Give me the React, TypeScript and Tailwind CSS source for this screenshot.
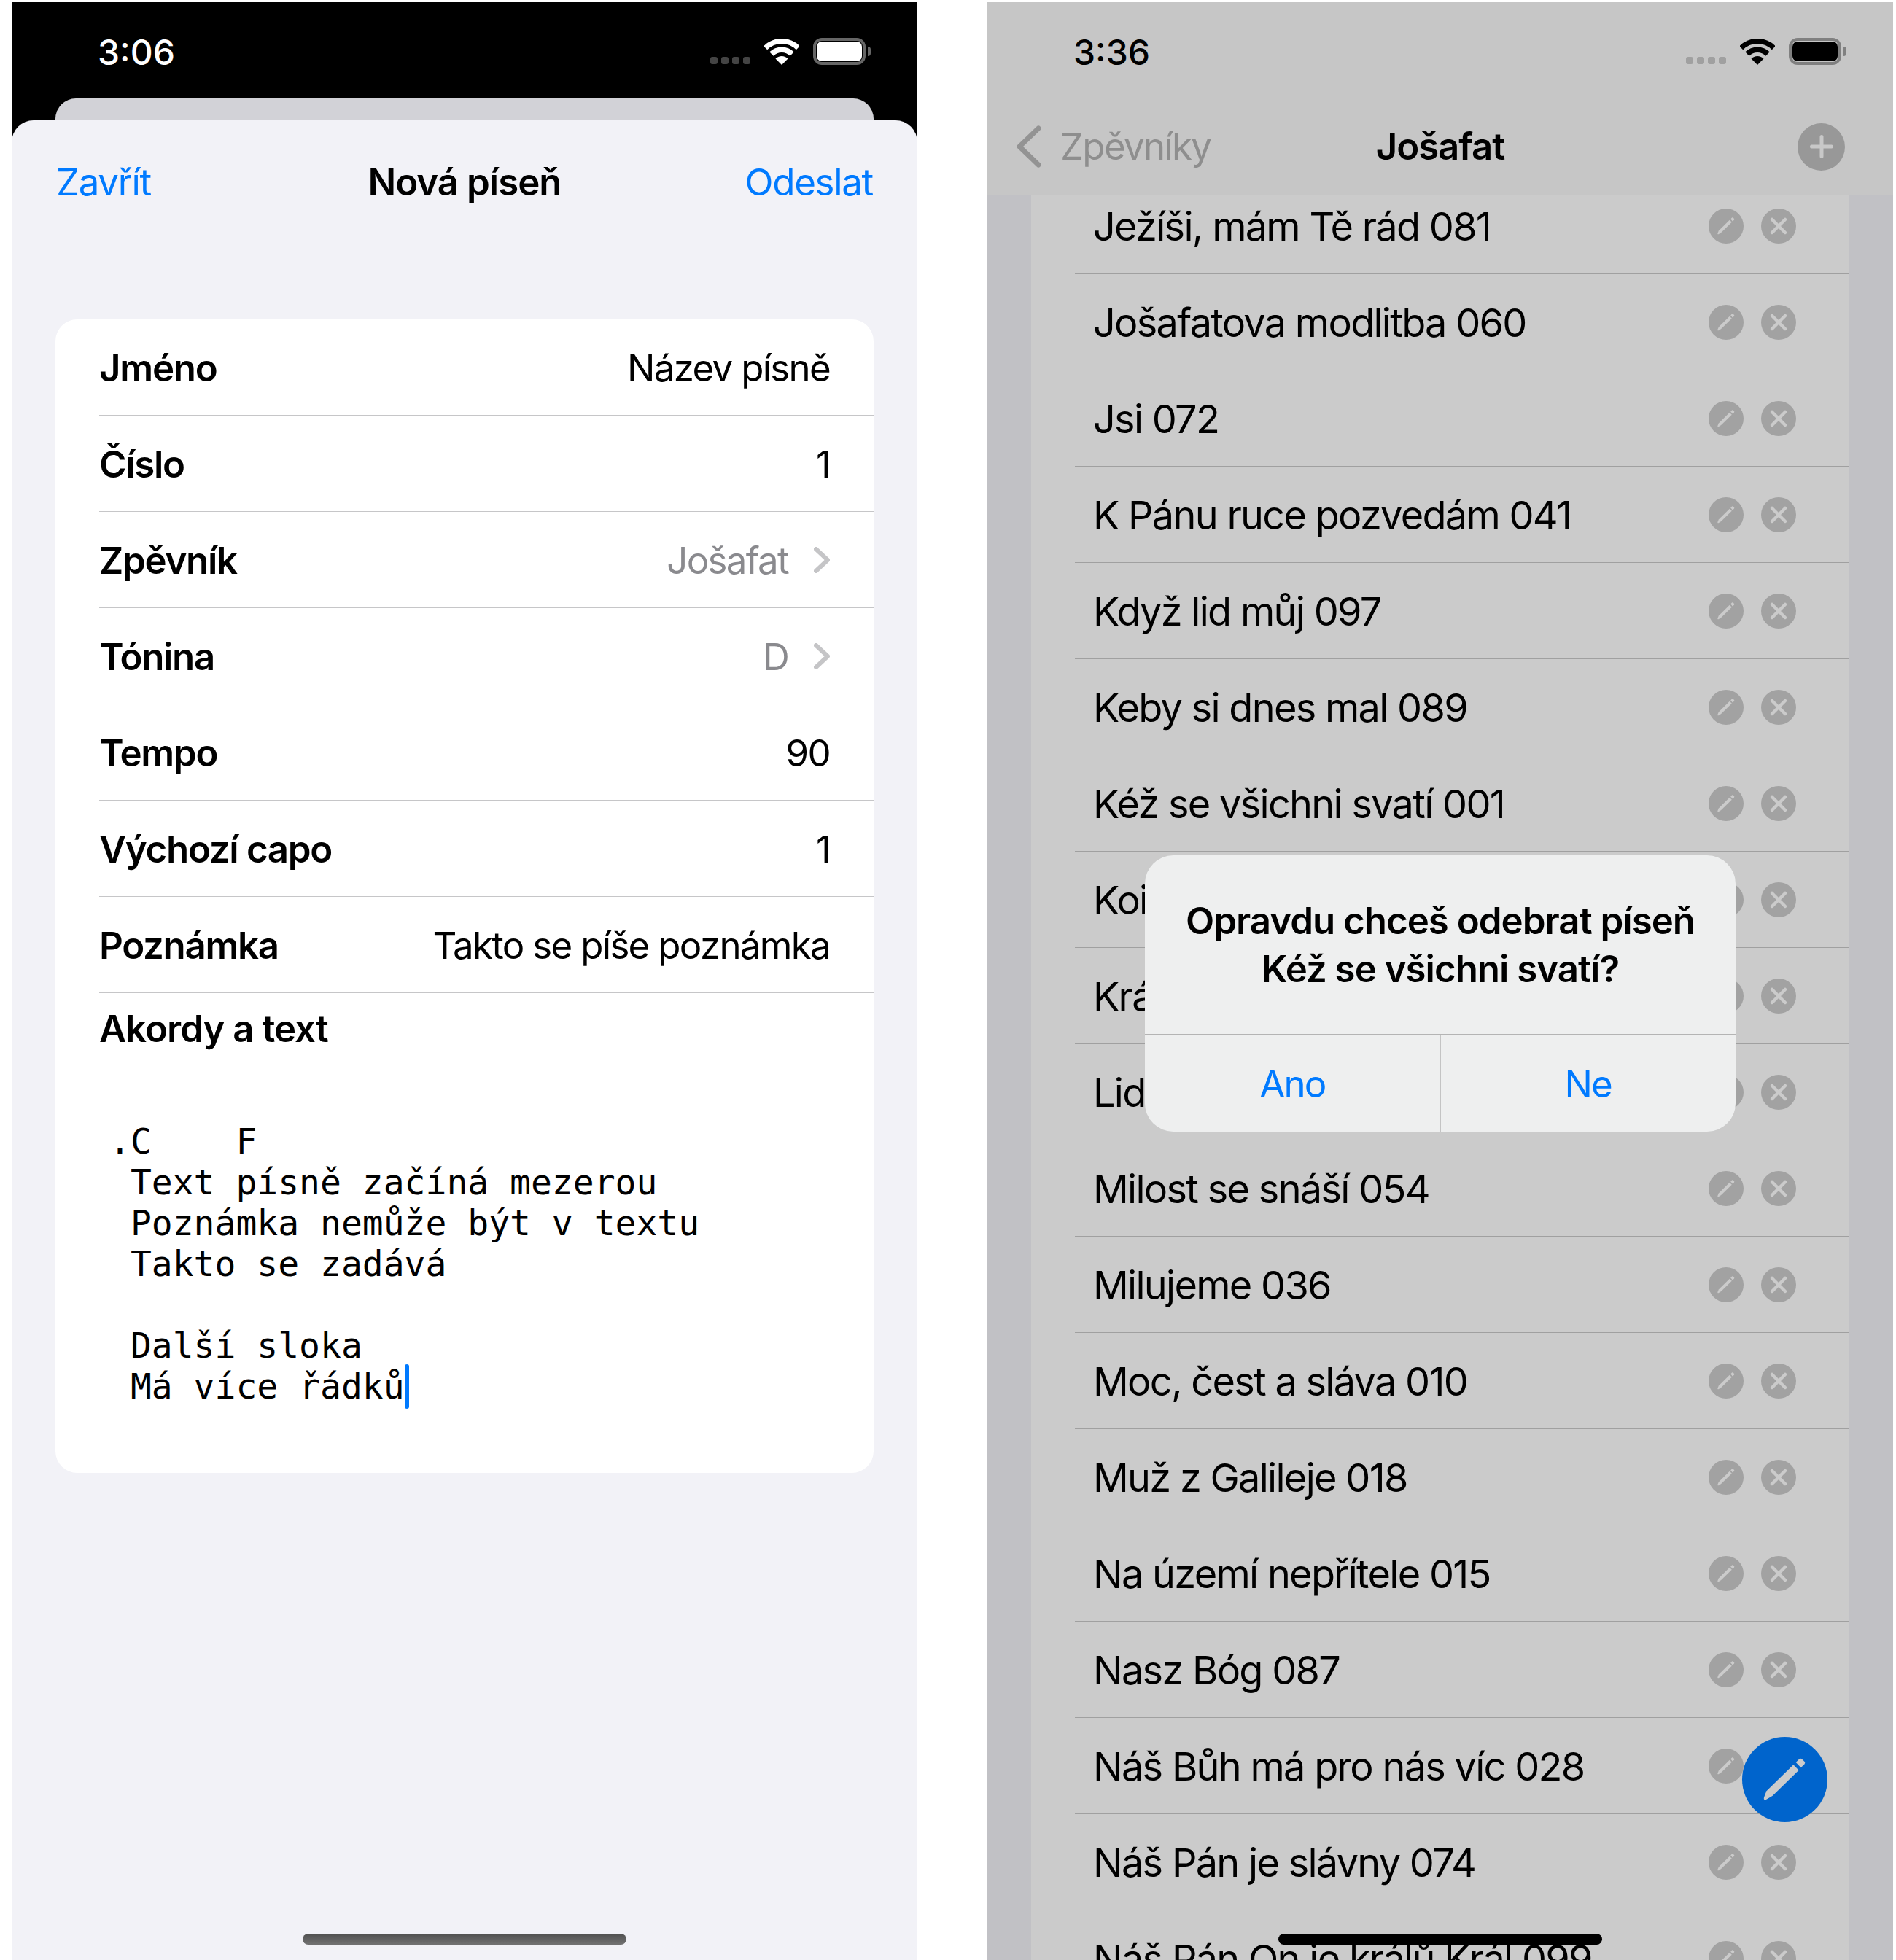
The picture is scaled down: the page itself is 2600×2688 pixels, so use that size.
import React from "react";

const SANS = "font-['Inter','Liberation_Sans',sans-serif]";

function Pencil({ className }: { className: string }) {
  return (
    <svg viewBox="0 0 60 60" className={className} fill="currentColor">
      <path d="M1 55 L4.5 46 L42 9.5 L49.5 17 L13 52.5 L4 58 Q0 59.5 1 55 Z" />
      <path d="M45.5 6 L50 1.5 Q52 0 54 1.5 L57.5 5 Q59 7 57.5 8.5 L52.5 13.5 Z" />
    </svg>
  );
}

function Cross() {
  return (
    <svg viewBox="0 0 48 48" className="w-[48px] h-[48px]" stroke="#cbcbcb" strokeWidth="4.5" strokeLinecap="round">
      <path d="M15 15 L33 33 M33 15 L15 33" />
    </svg>
  );
}

function StatusIcons({ dots, fg, frame, nub }: { dots: string; fg: string; frame: string; nub: string }) {
  return (
    <div className="flex items-start pt-[49px]">
      <div className="flex gap-[5px] mt-[26px]">
        <div className={`w-[10px] h-[10px] rounded-[3px] ${dots}`} />
        <div className={`w-[10px] h-[10px] rounded-[3px] ${dots}`} />
        <div className={`w-[10px] h-[10px] rounded-[3px] ${dots}`} />
        <div className={`w-[10px] h-[10px] rounded-[3px] ${dots}`} />
      </div>
      <svg viewBox="0 0 48 36" className="w-[48px] h-[36px] ml-[19px] mt-[1px]" fill="none" stroke={fg}>
        <path d="M1.7 12.7 A31.5 31.5 0 0 1 46.3 12.7" strokeWidth="7" />
        <path d="M9.9 21 A20 20 0 0 1 38.1 21" strokeWidth="7.5" />
        <path d="M24 36 L15.5 27.5 A12 12 0 0 1 32.5 27.5 Z" fill={fg} stroke="none" />
      </svg>
      <div className={`ml-[19px] w-[72px] h-[37px] rounded-[12px] border-[4px] p-[1px] ${frame}`}>
        <div className="w-full h-full rounded-[7px]" style={{ background: fg }} />
      </div>
      <div className={`ml-[3px] mt-[12px] w-[4px] h-[13px] rounded-r-[4px] ${nub}`} />
    </div>
  );
}

const FORM: [string, string, boolean?][] = [
  ["Jméno", "Název písně"],
  ["Číslo", "1"],
  ["Zpěvník", "Jošafat", true],
  ["Tónina", "D", true],
  ["Tempo", "90"],
  ["Výchozí capo", "1"],
  ["Poznámka", "Takto se píše poznámka"],
];

const SONGS = [
  "Ježíši, mám Tě rád 081",
  "Jošafatova modlitba 060",
  "Jsi 072",
  "K Pánu ruce pozvedám 041",
  "Když lid můj 097",
  "Keby si dnes mal 089",
  "Kéž se všichni svatí 001",
  "Koinonia 044",
  "Král králů 012",
  "Lid Boží 040",
  "Milost se snáší 054",
  "Milujeme 036",
  "Moc, čest a sláva 010",
  "Muž z Galileje 018",
  "Na území nepřítele 015",
  "Nasz Bóg 087",
  "Náš Bůh má pro nás víc 028",
  "Náš Pán je slávny 074",
  "Náš Pán On je králů Král 099",
];

function LeftPhone() {
  return (
    <div className="relative w-[1242px] h-[2685px] bg-black flex flex-col overflow-hidden shrink-0">
      <div className="h-[132px] flex justify-between pl-[118px] pr-[64px]">
        <div className="text-white text-[48px] font-medium leading-[58px] pt-[40px]">3:06</div>
        <StatusIcons dots="bg-[#444444]" fg="#ffffff" frame="border-[#666666]" nub="bg-[#666666]" />
      </div>
      <div className="mx-[60px] h-[30px] rounded-t-[28px] bg-[#d2d2d7]" />
      <div className="flex-1 bg-[#f2f2f7] rounded-t-[30px] px-[60px]">
        <div className="h-[168px] pt-[2px] flex items-center text-[51px] tracking-[-1.3px] text-[#007aff]">
          <div className="flex-1 pl-[1px]">Zavřít</div>
          <div className="font-semibold tracking-[-1px] text-black">Nová píseň</div>
          <div className="flex-1 text-right pr-[1px]">Odeslat</div>
        </div>
        <div className="mt-[105px] bg-white rounded-[30px] pl-[60px]">
          {FORM.map(([label, value, chev]) => (
            <div key={label} className="h-[132px] pt-[3px] border-b border-[#c6c6c8] flex items-center justify-between pr-[60px] text-[51px]">
              <div className="font-semibold tracking-[-1.3px] text-black">{label}</div>
              {chev ? (
                <div className="flex items-center gap-[35px] tracking-[-1.7px] text-[#8a8a8e]">
                  <span>{value}</span>
                  <svg viewBox="0 0 22 36" className="w-[22px] h-[36px] -mt-[3px]" fill="none" stroke="#c5c5c7" strokeWidth="6" strokeLinecap="round" strokeLinejoin="round">
                    <path d="M3 3 L19 18 L3 33" />
                  </svg>
                </div>
              ) : (
                <div className="tracking-[-1.7px] text-black">{value}</div>
              )}
            </div>
          ))}
          <div className="h-[175px] pt-[19px] text-[51px] leading-[60px] font-semibold tracking-[-1px] text-black">Akordy a text</div>
          <pre className="pl-[14px] pb-[91px] font-['DejaVu_Sans_Mono',monospace] text-[48px] leading-[56px] text-black whitespace-pre">
            {".C    F\n Text písně začíná mezerou\n Poznámka nemůže být v textu\n Takto se zadává\n\n Další sloka\n Má více řádků"}
            <span className="relative inline-block w-0 h-0">
              <span className="absolute left-0 bottom-[-14px] w-[6px] h-[61px] rounded-[3px] bg-[#007aff]" />
            </span>
          </pre>
        </div>
      </div>
      <div className="absolute left-[399px] top-[2649px] w-[444px] h-[15px] rounded-full bg-[linear-gradient(180deg,#505050,#727272)]" />
    </div>
  );
}

function RightPhone() {
  return (
    <div className="relative w-[1242px] h-[2685px] bg-[#c1c1c5] flex flex-col overflow-hidden shrink-0">
      <div className="relative z-10 h-[265px] shrink-0 bg-[#c6c6c6] border-b border-[#969696]">
        <div className="h-[132px] flex justify-between pl-[118px] pr-[64px]">
          <div className="text-black text-[48px] font-medium leading-[58px] pt-[40px]">3:36</div>
          <StatusIcons dots="bg-[#a0a0a0]" fg="#000000" frame="border-[#808080]" nub="bg-[#808080]" />
        </div>
        <div className="h-[132px] flex items-center justify-between pl-[40px] pr-[66px] text-[51px]">
          <div className="flex items-center gap-[26px] w-[380px] tracking-[-1.7px] text-[#8e8e8e]">
            <svg viewBox="0 0 34 58" className="w-[34px] h-[58px]" fill="none" stroke="#939393" strokeWidth="7" strokeLinecap="round" strokeLinejoin="round">
              <path d="M30 4 L4 29 L30 54" />
            </svg>
            <span>Zpěvníky</span>
          </div>
          <div className="font-semibold tracking-[-1.1px] text-black">Jošafat</div>
          <div className="w-[354px] flex justify-end">
            <div className="w-[65px] h-[65px] rounded-full bg-[#989898] flex items-center justify-center">
              <svg viewBox="0 0 32 32" className="w-[32px] h-[32px]" stroke="#c8c8c8" strokeWidth="5" strokeLinecap="round">
                <path d="M16 2.5 V29.5 M2.5 16 H29.5" />
              </svg>
            </div>
          </div>
        </div>
      </div>
      <div className="mx-[60px] -mt-[24px] bg-[#cbcbcb] pl-[60px]">
        {SONGS.map((s) => (
          <div key={s} className="h-[132px] border-b border-[#a0a0a0] flex items-center justify-between pl-[25px] pr-[73px] text-black">
            <div className="whitespace-nowrap text-[54px] tracking-[-1.7px] pt-[2px]">{s}</div>
            <div className="flex items-center gap-[24px]">
              <div className="w-[48px] h-[48px] rounded-full bg-[#a2a2a2] flex items-center justify-center text-[#cbcbcb]">
                <Pencil className="w-[24px] h-[24px]" />
              </div>
              <div className="w-[48px] h-[48px] rounded-full bg-[#a2a2a2]">
                <Cross />
              </div>
            </div>
          </div>
        ))}
      </div>
      <div className="absolute z-20 left-[399px] top-[2649px] w-[444px] h-[15px] rounded-full bg-black" />
      <div className="absolute z-20 left-[1035px] top-[2379px] w-[117px] h-[117px] rounded-full bg-[#0064cc] flex items-center justify-center text-[#cbcbcb]">
        <Pencil className="w-[59px] h-[59px]" />
      </div>
      <div className="absolute z-30 left-[216px] top-[1170px] w-[810px] h-[379px] rounded-[39px] bg-[#eeefef] flex flex-col text-[51px]">
        <div className="h-[246px] border-b border-[#b4b4b4] flex items-center justify-center text-center font-semibold tracking-[-1px] leading-[66px] text-black">
          Opravdu chceš odebrat píseň
          <br />
          Kéž se všichni svatí?
        </div>
        <div className="flex-1 flex tracking-[-1.9px] text-[#007aff]">
          <div className="flex-1 border-r border-[#c4c4c4] flex items-center justify-center">
            <span className="pt-[4px]">Ano</span>
          </div>
          <div className="flex-1 flex items-center justify-center">
            <span className="pt-[4px]">Ne</span>
          </div>
        </div>
      </div>
    </div>
  );
}

export default function App() {
  return (
    <div className={`w-[2600px] h-[2688px] overflow-hidden bg-white pt-[3px] pl-[16px] flex gap-[96px] ${SANS}`}>
      <LeftPhone />
      <RightPhone />
    </div>
  );
}
